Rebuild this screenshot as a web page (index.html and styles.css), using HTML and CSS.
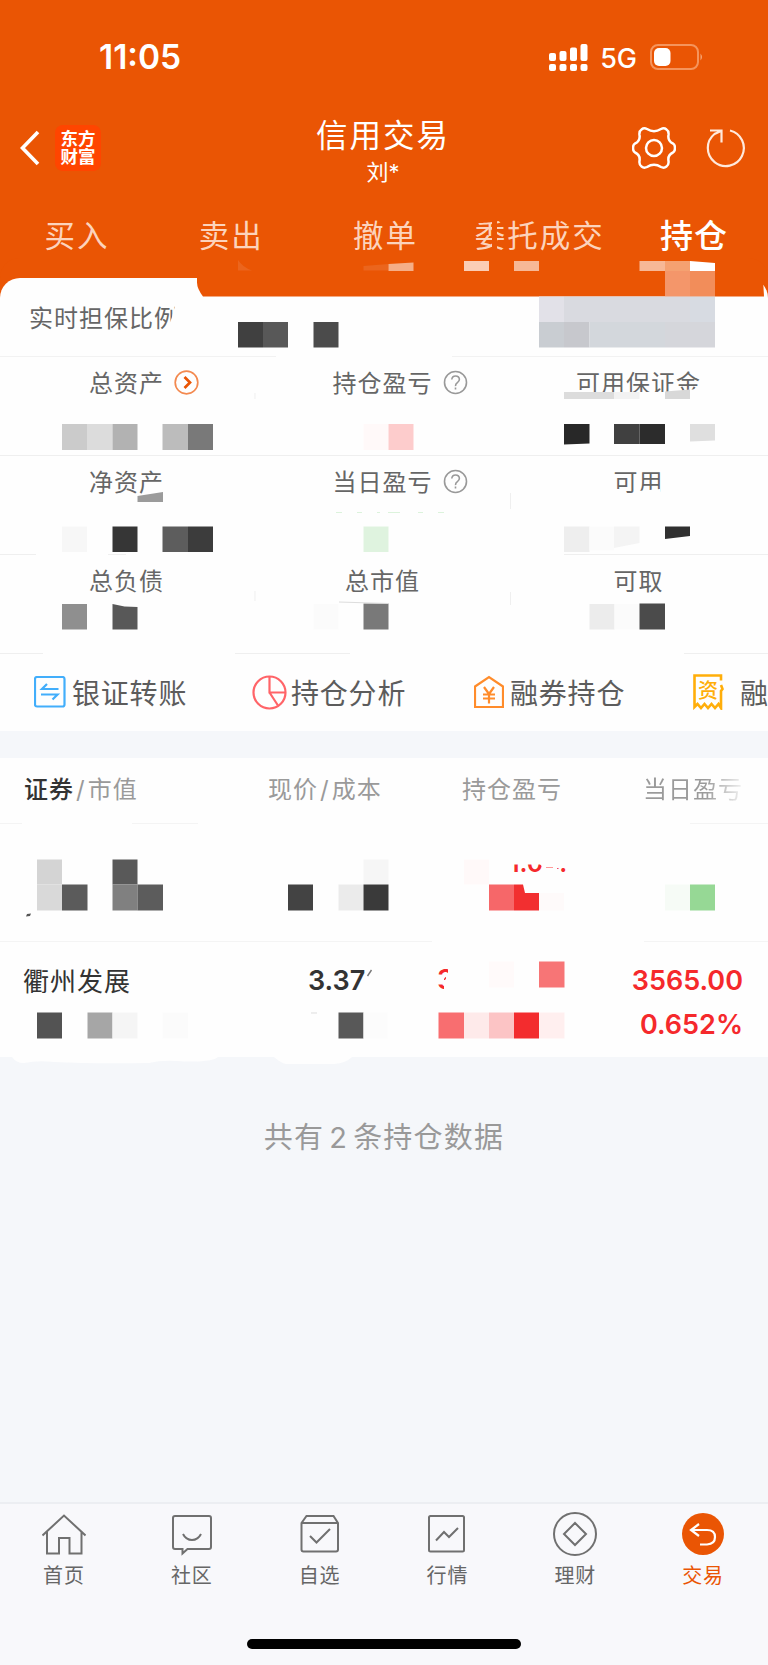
FILE: index.html
```html
<!DOCTYPE html>
<html lang="zh-CN">
<head>
    <meta charset="utf-8">
    <title>信用交易</title>
    <link rel="stylesheet" href="styles.css">
</head>
<body>
    <div class="page">
        <header class="header">
            <div class="status">
                <span class="time">11:05</span>
                <div class="status-right">
                    <svg class="signal" width="39" height="28" viewBox="0 0 39 28" fill="#fff">
                        <rect x="0" y="9" width="7" height="8" rx="2"/><rect x="10.5" y="7" width="7" height="10" rx="2"/>
                        <rect x="21" y="3.5" width="7" height="13.500" rx="2"/><rect x="31.500" y="0" width="7" height="17" rx="2"/>
                        <rect x="0" y="20" width="7" height="7" rx="2"/><rect x="10.5" y="20" width="7" height="7" rx="2"/>
                        <rect x="21" y="20" width="7" height="7" rx="2"/><rect x="31.500" y="20" width="7" height="7" rx="2"/>
                    </svg>
                    <span class="network">5G</span>
                    <svg class="battery" width="54" height="26" viewBox="0 0 54 26">
                        <rect x="1" y="1" width="47" height="24" rx="7" fill="none" stroke="#f5945c" stroke-width="2"/>
                        <rect x="4" y="4" width="16.500" height="18" rx="5" fill="#fff"/>
                        <path d="M50.500 9.500q3 3.500 0 7z" fill="#f5a878"/>
                    </svg>
                </div>
            </div>
            <div class="titlebar">
                <svg class="back" width="20" height="36" viewBox="0 0 20 36" fill="none" stroke="#fff" stroke-width="3.600"><path d="M18 2L2.500 18 18 34"/></svg>
                <div class="logo">东方<br>财富</div>
                <div class="title">
                    <h1>信用交易</h1>
                    <p>刘*</p>
                </div>
                <svg class="gear" width="44" height="44" viewBox="-22 -22 44 44" fill="none" stroke="#fff" stroke-width="2.500">
                    <path d="M-12.500 -18.500Q-10 -20.500 -7 -19Q0 -14.500 7 -19Q10 -20.500 12.500 -18.500Q15 -17 14.500 -13Q13.500 -7 19 -4.500Q21 -3.500 21 0Q21 3.500 19 4.500Q13.500 7 14.500 13Q15 17 12.500 18.500Q10 20.500 7 19Q0 14.500 -7 19Q-10 20.500 -12.500 18.500Q-15 17 -14.500 13Q-13.500 7 -19 4.500Q-21 3.500 -21 0Q-21 -3.500 -19 -4.500Q-13.500 -7 -14.500 -13Q-15 -17 -12.500 -18.500Z"/>
                    <circle r="8"/>
                </svg>
                <svg class="refresh" width="40" height="40" viewBox="-20 -20 40 40" fill="none" stroke="#ffe9dc" stroke-width="2.200">
                    <path d="M4 -17.500A18 18 0 1 1 -11.500 -14L-5 -17M-16 -17.500H-4.500V-5.500"/>
                </svg>
            </div>
            <nav class="tabs">
                <a>买入</a>
                <a>卖出</a>
                <a>撤单</a>
                <a>委托成交</a>
                <a class="active">持仓</a>
            </nav>
        </header>

        <section class="summary">
            <div class="ratio">实时担保比例</div>
            <div class="grid">
                <div class="cell"><span class="label">总资产
                    <svg class="hint" width="25" height="25" viewBox="0 0 25 25" fill="none"><circle cx="12.500" cy="12.500" r="11.300" stroke="#f3894f" stroke-width="1.700"/><path d="M10.500 7l5.500 5.500-5.500 5.500" stroke="#ea5504" stroke-width="2.700"/></svg>
                </span></div>
                <div class="cell"><span class="label">持仓盈亏
                    <svg class="hint" width="25" height="25" viewBox="0 0 25 25" fill="none" stroke="#999" stroke-width="1.600"><circle cx="12.500" cy="12.500" r="11"/><path d="M8.800 9.500q.3-3.500 3.800-3.500t3.800 3.300q0 2-2 3.300t-1.900 3.500M12.500 17.600v1.800"/></svg>
                </span></div>
                <div class="cell"><span class="label">可用保证金</span></div>
                <div class="cell"><span class="label">净资产</span></div>
                <div class="cell"><span class="label">当日盈亏
                    <svg class="hint" width="25" height="25" viewBox="0 0 25 25" fill="none" stroke="#999" stroke-width="1.600"><circle cx="12.500" cy="12.500" r="11"/><path d="M8.800 9.500q.3-3.500 3.800-3.500t3.800 3.300q0 2-2 3.300t-1.900 3.500M12.500 17.600v1.800"/></svg>
                </span></div>
                <div class="cell"><span class="label">可用</span></div>
                <div class="cell"><span class="label">总负债</span></div>
                <div class="cell"><span class="label">总市值</span></div>
                <div class="cell"><span class="label">可取</span></div>
            </div>
        </section>

        <section class="actions">
            <div class="action">
                <svg width="32" height="32" viewBox="0 0 32 32" fill="none" stroke="#42aefb" stroke-width="2.200"><rect x="1" y="1" width="29.500" height="29.500" rx="2"/><path d="M24.500 13H8l5-5M7 18.500h16.500l-5 5"/></svg>
                <span>银证转账</span>
            </div>
            <div class="action pie">
                <svg width="35" height="35" viewBox="0 0 35 35" fill="none" stroke="#ff6468" stroke-width="2.200"><circle cx="17.500" cy="17.500" r="16"/><path d="M17.500 1.500v16h16M17.500 17.500l8.500 13"/></svg>
                <span>持仓分析</span>
            </div>
            <div class="action house">
                <svg width="30" height="34" viewBox="0 0 30 34" fill="none" stroke="#ff8c2b" stroke-width="2.200"><path d="M1 11.500L15 2l14 9.500V32H1z"/><path d="M10 12l5 7 5-7M9 19.500h12M9 23.500h12M15 19v9.500"/></svg>
                <span>融券持仓</span>
            </div>
            <div class="action bill">
                <svg width="31" height="36" viewBox="0 0 31 36" fill="none" stroke="#ffae0a" stroke-width="2.600"><path d="M28 6.500V1.500H1.500V33l3-3 3.500 4 3.500-4 3.500 4 3.500-4 3.500 4 3.500-4 2.500 4V17l1.500-2-1.500-4"/><text x="5" y="23.500">资</text></svg>
                <span>融</span>
            </div>
        </section>

        <section class="holdings">
            <div class="thead">
                <span><b>证券</b><i>/</i>市值</span>
                <span class="c2">现价<i>/</i>成本</span>
                <span class="c3">持仓盈亏</span>
                <span class="c4">当日盈亏</span>
            </div>
            <div class="row"></div>
            <div class="row">
                <span class="name">衢州发展</span>
                <span class="price">3.37</span>
                <div class="today"><span>3565.00</span><span>0.652%</span></div>
            </div>
        </section>

        <p class="total">共有<span>2</span>条持仓数据</p>

        <footer class="bottom">
            <nav class="menu">
                <a>
                    <svg width="44" height="44" viewBox="-22 -22 44 44"><path d="M-21.500 1.500L0-18.500 21.500 1.500M-17-2V19.500H-5V4H5.500V19.500H17.500V-2"/></svg>
                    首页
                </a>
                <a>
                    <svg width="44" height="44" viewBox="-22 -22 44 44"><path d="M-17-18H17q2 0 2 2V13q0 2-2 2H-4.500L-9.500 19.500V15H-17q-2 0-2-2V-16q0-2 2-2zM-9 0q3 6 9 6t9-6"/></svg>
                    社区
                </a>
                <a>
                    <svg width="44" height="44" viewBox="-22 -22 44 44"><path d="M-18.500-11L-13.500-18H13.500L18-11V15.500q0 2-2 2H-16.500q-2 0-2-2zM-18.500-11H18M-10 2L-3.500 8.500 10-5"/></svg>
                    自选
                </a>
                <a>
                    <svg width="44" height="44" viewBox="-22 -22 44 44"><rect x="-18" y="-18" width="35" height="35.500" rx="1.500"/><path d="M-11 6.500L-3-2 2 3 11-6"/></svg>
                    行情
                </a>
                <a>
                    <svg width="44" height="44" viewBox="-22 -22 44 44"><circle r="21"/><path d="M0-11L11 0 0 11-11 0z"/></svg>
                    理财
                </a>
                <a class="active">
                    <svg width="44" height="44" viewBox="-22 -22 44 44"><circle r="21" class="disc"/><path class="arrow" d="M-4-10L-12-4-4 2M-12-4H4q8 0 8 7t-8 7.500H-3"/></svg>
                    交易
                </a>
            </nav>
            <div class="home-bar"></div>
        </footer>

        <!-- privacy mosaic over the amounts -->
        <svg class="mosaic" width="768" height="1665" viewBox="0 0 768 1665">
            <g fill="#ea5504">
                <path d="M197 276h555v20.500H203q-6-8-6-14z"/>
                <rect x="492" y="218" width="5" height="34"/>
                <path d="M752 278h10q2 9 2 18.500h-12z"/>
            </g>
            <path d="M238 260v10.500h14q-9-3-14-10.500zM363.500 266l25-2v6.500h-25z" fill="#eb651d"/>
            <path d="M388.500 264l25-1.500v8.500h-25z" fill="#f5ae87"/>
            <rect x="464" y="261" width="25" height="10" fill="#fbcdb5"/>
            <rect x="514" y="261" width="25" height="10" fill="#f7b896"/>
            <rect x="639.500" y="261" width="25.500" height="10" fill="#f7b896"/>
            <rect x="665" y="261" width="25" height="10" fill="#f5a171"/>
            <path d="M690 261l25 2v8h-25z" fill="#fff"/>
            <rect x="665" y="271" width="25" height="25.500" fill="#f4966a"/>
            <rect x="690" y="271" width="25" height="25.500" fill="#f28d5a"/>
            <rect x="539" y="296.500" width="25" height="25.500" fill="#e2e1e8"/>
            <rect x="564" y="296.500" width="126" height="25.500" fill="#d9dae0"/>
            <rect x="690" y="296.500" width="25" height="25.500" fill="#d7dbe2"/>
            <rect x="539" y="322" width="25" height="25.500" fill="#c9cdd2"/>
            <rect x="564" y="322" width="25.500" height="25.500" fill="#c7c8cd"/>
            <rect x="589.500" y="322" width="75.500" height="25.500" fill="#d3d7dc"/>
            <rect x="665" y="322" width="50" height="25.500" fill="#d5d6db"/>

            <!-- ratio -->
            <path d="M175 306h8v28h-22l8-9 3-8z" fill="#fefefe"/>
            <rect x="238" y="322" width="25" height="25.500" fill="#404040"/>
            <rect x="263" y="322" width="25" height="25.500" fill="#585858"/>
            <rect x="313.500" y="322" width="25" height="25.500" fill="#4b4b4b"/>
            <rect x="276" y="355" width="176" height="3" fill="#fefefe"/>

            <!-- assets -->
            <rect x="62" y="424" width="25" height="26" fill="#cbcbcb"/>
            <rect x="87" y="424" width="25.500" height="26" fill="#dcdcdc"/>
            <rect x="112.500" y="424" width="25" height="26" fill="#b2b2b2"/>
            <rect x="162.500" y="424" width="25.500" height="26" fill="#bcbcbc"/>
            <rect x="188" y="424" width="25" height="26" fill="#797979"/>
            <rect x="363.500" y="424" width="25" height="26" fill="#fff9f9"/>
            <rect x="388.500" y="424" width="25" height="26" fill="#fdcccc"/>
            <path d="M575 392h105l20-4v12H575z" fill="#fefefe"/>
            <rect x="564" y="392" width="50" height="7" fill="#dcdcdc"/>
            <rect x="614" y="392" width="25.500" height="7" fill="#f2f2f2"/>
            <path d="M665 391.500l25-2v9.500h-25z" fill="#d8d8d8"/>
            <path d="M564 424h25.500v19.500l-25.500 1z" fill="#282828"/>
            <rect x="614" y="424" width="25.500" height="20" fill="#404040"/>
            <rect x="639.500" y="424" width="25.500" height="20" fill="#2c2c2c"/>
            <path d="M690 424h25v16.500l-25 1z" fill="#dfdfdf"/>

            <path d="M137.500 496l25.500-4v10h-25.500z" fill="#9b9b9b"/>
            <rect x="62" y="526.500" width="25" height="25.500" fill="#f7f7f7"/>
            <rect x="112.500" y="526.500" width="25" height="25.500" fill="#363636"/>
            <rect x="162.500" y="526.500" width="25.500" height="25.500" fill="#5d5d5d"/>
            <rect x="188" y="526.500" width="25" height="25.500" fill="#3c3c3c"/>
            <path d="M336 512.500h6M357 512.500h5M377 512.500h3M388 512.500h12M418 512.500h5M438 512.500h6" stroke="#dcf3dc"/>
            <rect x="363.500" y="526.500" width="25" height="25.500" fill="#dff3df"/>
            <path d="M638 491l22-2v10h-22z" fill="#fefefe"/>
            <rect x="564" y="526.500" width="25.500" height="25.500" fill="#eee"/>
            <rect x="589.500" y="526.500" width="24.500" height="24" fill="#fbfbfb"/>
            <path d="M614 526.500h25.500V543L614 548z" fill="#f4f4f4"/>
            <path d="M665 526.500h25V536l-25 3z" fill="#303030"/>
            <path d="M126 552h438v4H126zM36 553h72v3H36z" fill="#fefefe"/>

            <rect x="62" y="604" width="25" height="25.500" fill="#8f8f8f"/>
            <path d="M112.500 604l12 2.500 13 .5v22.500h-25z" fill="#585858"/>
            <rect x="313.500" y="604" width="25" height="25.500" fill="#fbfbfb"/>
            <rect x="363.500" y="603.500" width="25" height="26" fill="#797979"/>
            <path d="M339 602l49 1.500" stroke="#ddd"/>
            <rect x="589.500" y="604" width="25" height="25.500" fill="#ececec"/>
            <rect x="614.500" y="604" width="25" height="25.500" fill="#fbfbfb"/>
            <rect x="639.500" y="603.500" width="25.500" height="26" fill="#4b4b4b"/>
            <path d="M43 651h192v4H43zM350 651h334v4H350z" fill="#fefefe"/>
            <path d="M255 393v6M255 591v10M510.500 493v16M510.500 592v13" stroke="#efefef"/>

            <!-- first holding -->
            <path d="M22 822h110v3H22zM198 822h492v3H198z" fill="#fefefe"/>
            <rect x="37" y="859.500" width="25" height="25" fill="#d4d4d4"/>
            <rect x="37" y="884.500" width="25" height="26" fill="#d9d9d9"/>
            <rect x="62" y="884.500" width="25.500" height="26" fill="#5b5b5b"/>
            <rect x="112.500" y="859.500" width="25" height="25" fill="#595959"/>
            <rect x="112.500" y="884.500" width="25" height="26" fill="#808080"/>
            <rect x="137.500" y="884.500" width="25.500" height="26" fill="#5c5c5c"/>
            <path d="M27 914l4-.5-1 2.500-4 .5z" fill="#555"/>
            <rect x="288" y="884.500" width="25" height="26" fill="#434343"/>
            <rect x="338.500" y="884.500" width="25" height="26" fill="#ebebeb"/>
            <rect x="363.500" y="859.500" width="25" height="25" fill="#f6f6f6"/>
            <rect x="363.500" y="884.500" width="25" height="26" fill="#3a3a3a"/>
            <rect x="464" y="859.500" width="25" height="25" fill="#fff9f9"/>
            <text class="cut small" x="509" y="871.500">1.04.</text>
            <path d="M500 848h70v20h-13v5h-14v-6l-3-2.500h-40z" fill="#fefefe"/>
            <path d="M546 867.500h7" stroke="#f99"/>
            <rect x="489" y="884.500" width="25" height="26" fill="#f66769"/>
            <path d="M514 884.500h9l2 8.500h14v17.500h-25z" fill="#f22f30"/>
            <rect x="539" y="893" width="25" height="17.500" fill="#fefafa"/>
            <rect x="665" y="884.500" width="25" height="26" fill="#f6fbf6"/>
            <rect x="690" y="884.500" width="25" height="26" fill="#96d895"/>
            <rect x="432" y="940" width="212" height="3" fill="#fefefe"/>

            <!-- second holding -->
            <path d="M367.500 976l4-6" stroke="#777" stroke-width="1.400"/>
            <rect x="37" y="1012.500" width="25" height="26" fill="#535353"/>
            <rect x="87.500" y="1012.500" width="25" height="26" fill="#a6a6a6"/>
            <rect x="112.500" y="1012.500" width="25" height="26" fill="#f5f5f5"/>
            <rect x="162.500" y="1012.500" width="25.500" height="26" fill="#fbfbfb"/>
            <path d="M311 1013h6" stroke="#ddd"/>
            <rect x="338.500" y="1012.500" width="25" height="26" fill="#585858"/>
            <rect x="363.500" y="1012.500" width="24" height="26" fill="#fcfcfc"/>
            <text class="cut" x="437" y="989">3</text>
            <path d="M448 966v7l-4 6v13h14v-26zM436 976.500l10-1v3l-4 6h-6z" fill="#fefefe"/>
            <rect x="489" y="961.500" width="25" height="26" fill="#fffafa"/>
            <rect x="539" y="961.500" width="25.500" height="26" fill="#f77576"/>
            <rect x="438.500" y="1012.500" width="25.500" height="26" fill="#f86e70"/>
            <rect x="464" y="1012.500" width="25" height="26" fill="#feeaea"/>
            <rect x="489" y="1012.500" width="25" height="26" fill="#fcc4c5"/>
            <rect x="514" y="1012.500" width="25" height="26" fill="#f32c2e"/>
            <rect x="539" y="1012.500" width="25.500" height="26" fill="#ffefef"/>
            <path d="M12 1057q4 6 12 6 14-3 30-1 40 2 95 1 12-3 28-2 34 2 41-4zM274 1057q7 6 12 7h48q12-1 18-7z" fill="#fefefe"/>
        </svg>
    </div>
</body>
</html>
```
FILE: styles.css
```css
* {
    box-sizing: border-box;
}
body {
    margin: 0;
    background: #f5f7fa;
    font-family: Inter, "Noto Sans CJK SC", sans-serif;
    color: #666;
}
h1, p {
    margin: 0;
    font-weight: 400;
}
svg {
    display: block;
    flex: none;
}
.page {
    position: relative;
    width: 768px;
    height: 1665px;
    overflow: hidden;
    display: flex;
    flex-direction: column;
    background: #f5f7fa;
}

/* header */
.header {
    height: 278px;
    background: #ea5504;
    color: #fff;
}
.status {
    height: 112px;
    padding: 2px 64px 0 99px;
    display: flex;
    align-items: center;
    justify-content: space-between;
}
.time {
    font-size: 33.5px;
    font-weight: 600;
}
.status-right {
    display: flex;
    align-items: center;
}
.network {
    margin: 3px 13px 0 12px;
    font-size: 27px;
    font-weight: 500;
}
.titlebar {
    height: 82px;
    padding: 0 22px 12px 20px;
    display: flex;
    align-items: center;
}
.signal {
    margin-top: 2px;
}
.back {
    margin: 2px 15px 0 0;
}
.logo {
    width: 46px;
    height: 46px;
    margin-top: 1px;
    padding-top: 5px;
    border-radius: 8px;
    background: #ff4500;
    font-size: 17.5px;
    font-weight: 700;
    line-height: 18.5px;
    text-align: center;
}
.title {
    flex: 1;
    padding: 12px 0 0 33px;
    text-align: center;
}
.title h1 {
    font-size: 31.5px;
    line-height: 38px;
    letter-spacing: 2px;
}
.title p {
    font-size: 22px;
    line-height: 34px;
}
.gear {
    margin: 2px 30px 0 0;
}
.refresh {
    margin-top: 2px;
}
.tabs {
    display: grid;
    grid-template-columns: repeat(5, 1fr);
    height: 84px;
    text-align: center;
    font-size: 30.5px;
    line-height: 84px;
    letter-spacing: 2px;
    color: #fcd3bc;
    width: 771px;
}
.tabs .active {
    font-size: 33px;
    font-weight: 500;
    letter-spacing: 1px;
    color: #fff;
}

/* account summary */
.summary {
    height: 376px;
    background: #fefefe;
    border-radius: 20px 20px 0 0;
    position: relative;
    box-shadow: 0 -20px 0 #ea5504;
}
.ratio {
    height: 79px;
    padding-left: 29px;
    border-bottom: 1px solid #f2f2f2;
    font-size: 24px;
    line-height: 82px;
    letter-spacing: 1px;
}
.grid {
    display: grid;
    grid-template-columns: repeat(3, 1fr);
    grid-auto-rows: 99px;
}
.cell {
    border-bottom: 1px solid #efefef;
    padding: 9px 3px 0 0;
    text-align: center;
    font-size: 24px;
    line-height: 36px;
    letter-spacing: 1px;
}
.label {
    position: relative;
}
.hint {
    position: absolute;
    left: 100%;
    top: 1px;
    margin-left: 10px;
}

/* shortcuts */
.actions {
    height: 77px;
    padding-left: 34px;
    display: flex;
    align-items: center;
    background: #fefefe;
    overflow: hidden;
}
.action {
    flex: none;
    width: 218px;
    display: flex;
    align-items: center;
    gap: 6px;
    font-size: 28px;
    letter-spacing: 0.8px;
    white-space: nowrap;
    color: #5c5c5c;
}
.action span {
    margin-top: -2px;
}
.action.pie {
    width: 222px;
    gap: 4px;
}
.action.house {
    width: 219px;
}
.action.bill {
    gap: 16px;
}
.action svg {
    margin-top: -1px;
}
.action text {
    font-size: 20px;
    font-weight: 500;
    fill: #ffae0a;
    stroke: none;
}

/* holdings table */
.holdings {
    margin-top: 27px;
    height: 299px;
    background: #fefefe;
}
.thead {
    height: 66px;
    padding-left: 24px;
    display: flex;
    border-bottom: 1px solid #f4f4f4;
    font-size: 24px;
    line-height: 63px;
    letter-spacing: 1px;
    color: #9a9a9a;
}
.thead span {
    width: 244px;
}
.thead b {
    font-weight: 500;
    color: #333;
}
.thead i {
    font-style: normal;
    padding: 0 2px;
}
.thead .c2 {
    width: 194px;
}
.thead .c3 {
    width: 181px;
}
.thead .c4 {
    width: 104px;
    color: transparent;
    background: linear-gradient(90deg, #9a9a9a 60%, #f6f6f6 98%);
    -webkit-background-clip: text;
    background-clip: text;
}
.row {
    height: 118px;
    display: flex;
    padding: 17px 25px 0 23px;
    border-bottom: 1px solid #f4f4f4;
    font-size: 27px;
    line-height: 44px;
    color: #333;
}
.row:last-child {
    height: 115px;
    border: 0;
}
.name {
    width: 285px;
    font-size: 26px;
    line-height: 45px;
    letter-spacing: 1px;
}
.price {
    font-weight: 600;
}
.today {
    margin-left: auto;
    display: flex;
    flex-direction: column;
    align-items: flex-end;
    color: #f5292c;
    font-weight: 600;
}
.total {
    padding-top: 58px;
    text-align: center;
    font-size: 29px;
    line-height: 46px;
    letter-spacing: 1.2px;
    color: #999;
}
.total span {
    padding: 0 5px;
}

/* bottom menu */
.bottom {
    margin-top: auto;
    height: 163px;
    border-top: 2px solid #eceef2;
    background: #f8f8fb;
}
.menu {
    display: grid;
    grid-template-columns: repeat(6, 1fr);
    width: 767px;
    height: 135px;
    padding-top: 8px;
}
.menu a {
    display: flex;
    flex-direction: column;
    align-items: center;
    font-size: 20px;
    line-height: 40px;
    letter-spacing: 0.8px;
}
.menu svg {
    fill: none;
    stroke: #707070;
    stroke-width: 2;
}
.menu .active {
    color: #ea5504;
}
.menu .disc {
    fill: #ea5504;
    stroke: none;
}
.menu .arrow {
    stroke: #fff;
    stroke-width: 2.2;
}
.home-bar {
    width: 274px;
    height: 10px;
    margin: 0 auto;
    border-radius: 5px;
    background: #000;
}

.mosaic {
    position: absolute;
    left: 0;
    top: 0;
    pointer-events: none;
}
.cut {
    font-size: 27px;
    font-weight: 600;
    fill: #f5292c;
}
.small {
    font-size: 25px;
}
```
